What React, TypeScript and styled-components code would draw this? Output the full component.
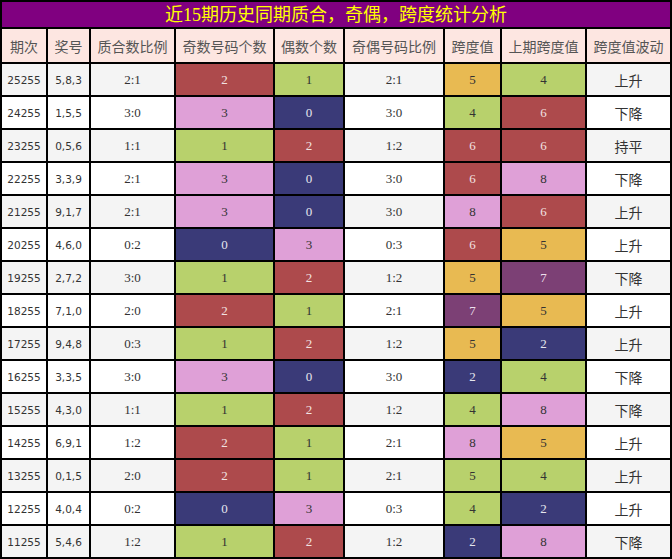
import React from "react";
import styled, { createGlobalStyle } from "styled-components";

const Global = createGlobalStyle`
  html, body { margin: 0; padding: 0; background: #fff; }
`;

const COLORS: Record<string, { bg: string; fg: string }> = {
  R: { bg: "#ad4a4c", fg: "#f2e2e2" },
  G: { bg: "#b8d16c", fg: "#333" },
  P: { bg: "#dfa0d7", fg: "#333" },
  N: { bg: "#3a3a78", fg: "#e6e6ee" },
  O: { bg: "#e8ba52", fg: "#333" },
  V: { bg: "#7c4075", fg: "#eee0ee" },
};

const Grid = styled.div`
  width: 672px;
  box-sizing: border-box;
  display: grid;
  grid-template-columns: 44px 41px 83px 97px 68px 98px 55px 83px 83px;
  grid-template-rows: 25px 33px;
  grid-auto-rows: 31px;
  gap: 2px;
  padding: 2px;
  background: #000;
`;

const Title = styled.div`
  grid-column: 1 / -1;
  background: #800080;
  color: #ffff00;
  font-family: "Liberation Serif", "Noto Sans CJK SC", serif;
  font-size: 18px;
  display: flex;
  align-items: center;
  justify-content: center;
  line-height: 1;
`;

const Head = styled.div`
  background: #fde6e1;
  color: #555;
  font-family: "Noto Sans CJK SC", sans-serif;
  font-size: 14px;
  display: flex;
  align-items: center;
  justify-content: center;
  white-space: nowrap;
`;

const Cell = styled.div<{ $alt: boolean; $kind?: "id" | "num" | "cjk" }>`
  background: ${(p) => (p.$alt ? "#f4f4f4" : "#ffffff")};
  color: #333;
  display: flex;
  align-items: center;
  justify-content: center;
  white-space: nowrap;
  font-family: ${(p) =>
    p.$kind === "id"
      ? `"DejaVu Sans", sans-serif`
      : p.$kind === "cjk"
      ? `"Noto Sans CJK SC", sans-serif`
      : `"Liberation Serif", serif`};
  font-size: ${(p) => (p.$kind === "id" ? "10.5px" : p.$kind === "cjk" ? "14px" : "13px")};
`;

const ColorCell = styled.div<{ $c: string }>`
  background: ${(p) => COLORS[p.$c].bg};
  color: ${(p) => COLORS[p.$c].fg};
  display: flex;
  align-items: center;
  justify-content: center;
  font-family: "Liberation Serif", serif;
  font-size: 13px;
`;

// id, nums, ratio, odd, oddC, even, evenC, oeRatio, span, spanC, prev, prevC, trend
const rows: string[][] = [
  ["25255", "5,8,3", "2:1", "2", "R", "1", "G", "2:1", "5", "O", "4", "G", "上升"],
  ["24255", "1,5,5", "3:0", "3", "P", "0", "N", "3:0", "4", "G", "6", "R", "下降"],
  ["23255", "0,5,6", "1:1", "1", "G", "2", "R", "1:2", "6", "R", "6", "R", "持平"],
  ["22255", "3,3,9", "2:1", "3", "P", "0", "N", "3:0", "6", "R", "8", "P", "下降"],
  ["21255", "9,1,7", "2:1", "3", "P", "0", "N", "3:0", "8", "P", "6", "R", "上升"],
  ["20255", "4,6,0", "0:2", "0", "N", "3", "P", "0:3", "6", "R", "5", "O", "上升"],
  ["19255", "2,7,2", "3:0", "1", "G", "2", "R", "1:2", "5", "O", "7", "V", "下降"],
  ["18255", "7,1,0", "2:0", "2", "R", "1", "G", "2:1", "7", "V", "5", "O", "上升"],
  ["17255", "9,4,8", "0:3", "1", "G", "2", "R", "1:2", "5", "O", "2", "N", "上升"],
  ["16255", "3,3,5", "3:0", "3", "P", "0", "N", "3:0", "2", "N", "4", "G", "下降"],
  ["15255", "4,3,0", "1:1", "1", "G", "2", "R", "1:2", "4", "G", "8", "P", "下降"],
  ["14255", "6,9,1", "1:2", "2", "R", "1", "G", "2:1", "8", "P", "5", "O", "上升"],
  ["13255", "0,1,5", "2:0", "2", "R", "1", "G", "2:1", "5", "G", "4", "G", "上升"],
  ["12255", "4,0,4", "0:2", "0", "N", "3", "P", "0:3", "4", "G", "2", "N", "上升"],
  ["11255", "5,4,6", "1:2", "1", "G", "2", "R", "1:2", "2", "N", "8", "P", "下降"],
];

const heads = ["期次", "奖号", "质合数比例", "奇数号码个数", "偶数个数", "奇偶号码比例", "跨度值", "上期跨度值", "跨度值波动"];

export default function App() {
  return (
    <>
      <Global />
      <Grid>
        <Title>近15期历史同期质合，奇偶，跨度统计分析</Title>
        {heads.map((h) => (
          <Head key={h}>{h}</Head>
        ))}
        {rows.map((r, i) => {
          const alt = i % 2 === 0;
          return (
            <React.Fragment key={r[0]}>
              <Cell $alt={alt} $kind="id">{r[0]}</Cell>
              <Cell $alt={alt} $kind="id">{r[1]}</Cell>
              <Cell $alt={alt} $kind="num">{r[2]}</Cell>
              <ColorCell $c={r[4]}>{r[3]}</ColorCell>
              <ColorCell $c={r[6]}>{r[5]}</ColorCell>
              <Cell $alt={alt} $kind="num">{r[7]}</Cell>
              <ColorCell $c={r[9]}>{r[8]}</ColorCell>
              <ColorCell $c={r[11]}>{r[10]}</ColorCell>
              <Cell $alt={alt} $kind="cjk">{r[12]}</Cell>
            </React.Fragment>
          );
        })}
      </Grid>
    </>
  );
}
